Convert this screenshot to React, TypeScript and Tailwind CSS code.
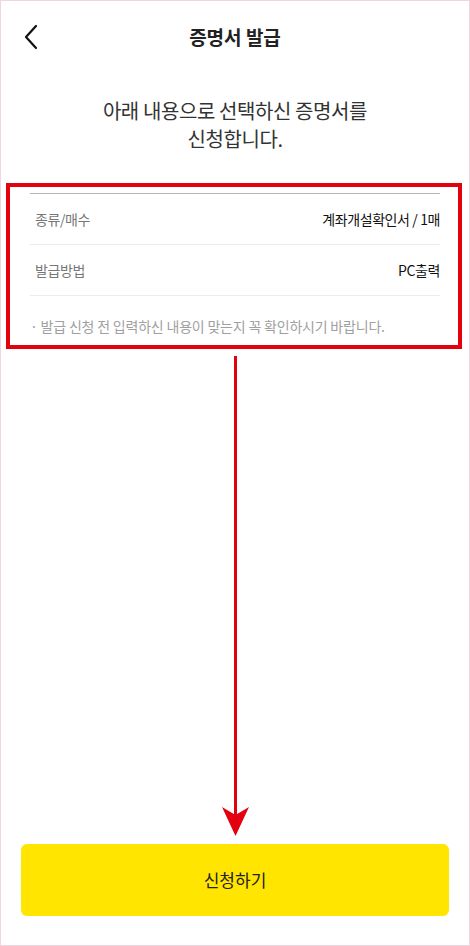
import React from "react";

const rows = [
  { label: "종류/매수", value: "계좌개설확인서 / 1매" },
  { label: "발급방법", value: "PC출력" },
];

function BackIcon() {
  return (
    <svg width="16" height="26" viewBox="0 0 16 26" fill="none">
      <path d="M13 2 L3 13 L13 24" stroke="#111" strokeWidth="2.2" strokeLinecap="round" strokeLinejoin="round" />
    </svg>
  );
}

function DownArrow() {
  return (
    <div className="flex h-full flex-col items-center">
      <div className="w-[3px] flex-1 bg-[#e3000f]" />
      <svg width="27" height="29" viewBox="0 0 27 29" className="-mt-[8px]">
        <path d="M0 0 L13.5 8 L27 0 L13.5 29 Z" fill="#e3000f" />
      </svg>
    </div>
  );
}

export default function App() {
  return (
    <div
      className="flex h-[946px] w-[470px] flex-col border border-[#f1d6df] bg-white"
      style={{ fontFamily: '"Noto Sans CJK KR", "Noto Sans", sans-serif' }}
    >
      <header className="relative flex h-[72px] shrink-0 items-center justify-center">
        <button className="absolute left-[22px] top-[23px]">
          <BackIcon />
        </button>
        <h1 className="text-[19px] font-bold text-[#222]">증명서 발급</h1>
      </header>

      <p className="mt-[24px] text-center text-[20px] leading-[28px] tracking-[-0.4px] text-[#333]">
        아래 내용으로 선택하신 증명서를
        <br />
        신청합니다.
      </p>

      <section className="ml-[5px] mt-[30px] w-[456px] border-[4px] border-[#e3000f] pb-[9px] pt-[6px]">
        <div className="ml-[20px] mr-[18px] border-t border-[#b5b5b5]">
          {rows.map((r) => (
            <div
              key={r.label}
              className="flex h-[51px] items-center justify-between border-b border-[#ececec] pl-[5px] text-[14px] tracking-[-0.4px]"
            >
              <span className="text-[#777]">{r.label}</span>
              <span className="text-[#111]">{r.value}</span>
            </div>
          ))}
          <p className="pt-[20px] text-[14px] leading-[20px] tracking-[-0.2px] text-[#a0a0a0]">
            · 발급 신청 전 입력하신 내용이 맞는지 꼭 확인하시기 바랍니다.
          </p>
        </div>
      </section>

      <div className="flex flex-1 justify-center pb-[8px] pt-[7px]">
        <DownArrow />
      </div>

      <button className="mx-[20px] mb-[29px] flex h-[72px] shrink-0 items-center justify-center rounded-[6px] bg-[#ffe500] text-[17px] text-[#222]">
        신청하기
      </button>
    </div>
  );
}
